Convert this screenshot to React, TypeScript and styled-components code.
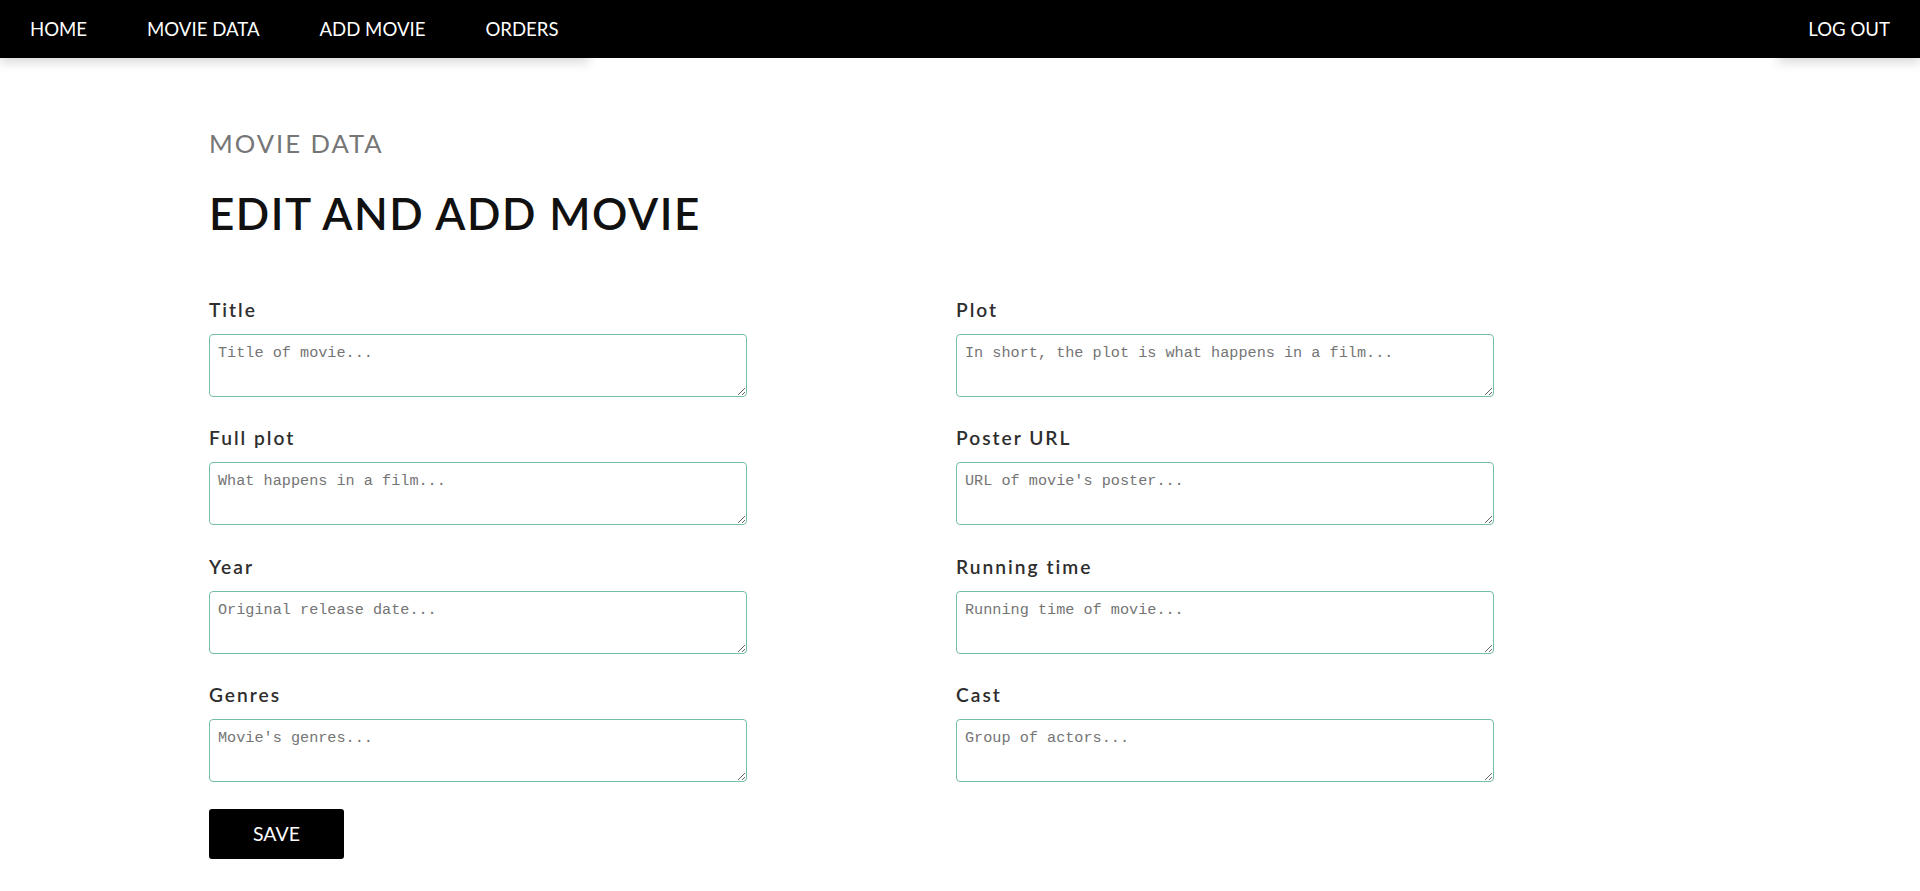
import React from "react";
import styled, { createGlobalStyle } from "styled-components";

const GlobalStyle = createGlobalStyle`
  * { box-sizing: border-box; }
  html, body { margin: 0; padding: 0; background: #fff; }
  body { font-family: Lato, "Open Sans", sans-serif; }
`;

const NavBar = styled.nav`
  height: 58px;
  background: #000;
  display: flex;
  justify-content: space-between;
  align-items: stretch;
`;

const NavList = styled.ul`
  list-style: none;
  margin: 0;
  padding: 0;
  background: #000;
  display: flex;
  align-items: center;
  box-shadow: 0 5px 10px rgba(0, 0, 0, 0.14);
`;

const NavItem = styled.li`
  padding: 0 30px;
  color: #fff;
  font-size: 18.6px;
  white-space: nowrap;
  cursor: pointer;
`;

const Main = styled.main`
  padding: 70px 0 33px 209px;
`;

const SubTitle = styled.h3`
  margin: 0;
  font-size: 25.6px;
  font-weight: 400;
  color: #767676;
  letter-spacing: 2px;
  line-height: 30px;
`;

const Title = styled.h1`
  margin: 28.5px 0 0 0;
  font-size: 44px;
  font-weight: 600;
  color: #111;
  letter-spacing: 1.5px;
  line-height: 53px;
`;

const FormGrid = styled.form`
  margin-top: 59px;
  display: grid;
  grid-template-columns: 538px 538px;
  column-gap: 209px;
  row-gap: 30.5px;
`;

const Field = styled.div`
  display: flex;
  flex-direction: column;
  gap: 13px;
`;

const Label = styled.label`
  font-size: 19.2px;
  font-weight: 600;
  color: #2e2e2e;
  letter-spacing: 2px;
  line-height: 22px;
`;

const TextArea = styled.textarea`
  width: 538px;
  height: 63px;
  border: 1px solid #76bea8;
  border-radius: 4px;
  padding: 9px 8px 7px;
  font-family: "Liberation Mono", "DejaVu Sans Mono", monospace;
  font-size: 15.2px;
  color: #333;
  resize: both;
  outline: none;
  &::placeholder {
    color: #757575;
  }
`;

const SaveButton = styled.button`
  grid-column: 1;
  margin-top: -4px;
  width: 135px;
  height: 50px;
  background: #000;
  color: #fff;
  border: none;
  border-radius: 3px;
  font-family: Lato, sans-serif;
  font-size: 19.5px;
  cursor: pointer;
`;

const fields: [string, string][] = [
  ["Title", "Title of movie..."],
  ["Plot", "In short, the plot is what happens in a film..."],
  ["Full plot", "What happens in a film..."],
  ["Poster URL", "URL of movie's poster..."],
  ["Year", "Original release date..."],
  ["Running time", "Running time of movie..."],
  ["Genres", "Movie's genres..."],
  ["Cast", "Group of actors..."],
];

export default function App() {
  return (
    <>
      <GlobalStyle />
      <NavBar>
        <NavList>
          <NavItem>HOME</NavItem>
          <NavItem>MOVIE DATA</NavItem>
          <NavItem>ADD MOVIE</NavItem>
          <NavItem>ORDERS</NavItem>
        </NavList>
        <NavList>
          <NavItem>LOG OUT</NavItem>
        </NavList>
      </NavBar>
      <Main>
        <SubTitle>MOVIE DATA</SubTitle>
        <Title>EDIT AND ADD MOVIE</Title>
        <FormGrid onSubmit={(e) => e.preventDefault()}>
          {fields.map(([label, ph]) => (
            <Field key={label}>
              <Label>{label}</Label>
              <TextArea placeholder={ph} />
            </Field>
          ))}
          <SaveButton type="submit">SAVE</SaveButton>
        </FormGrid>
      </Main>
    </>
  );
}
